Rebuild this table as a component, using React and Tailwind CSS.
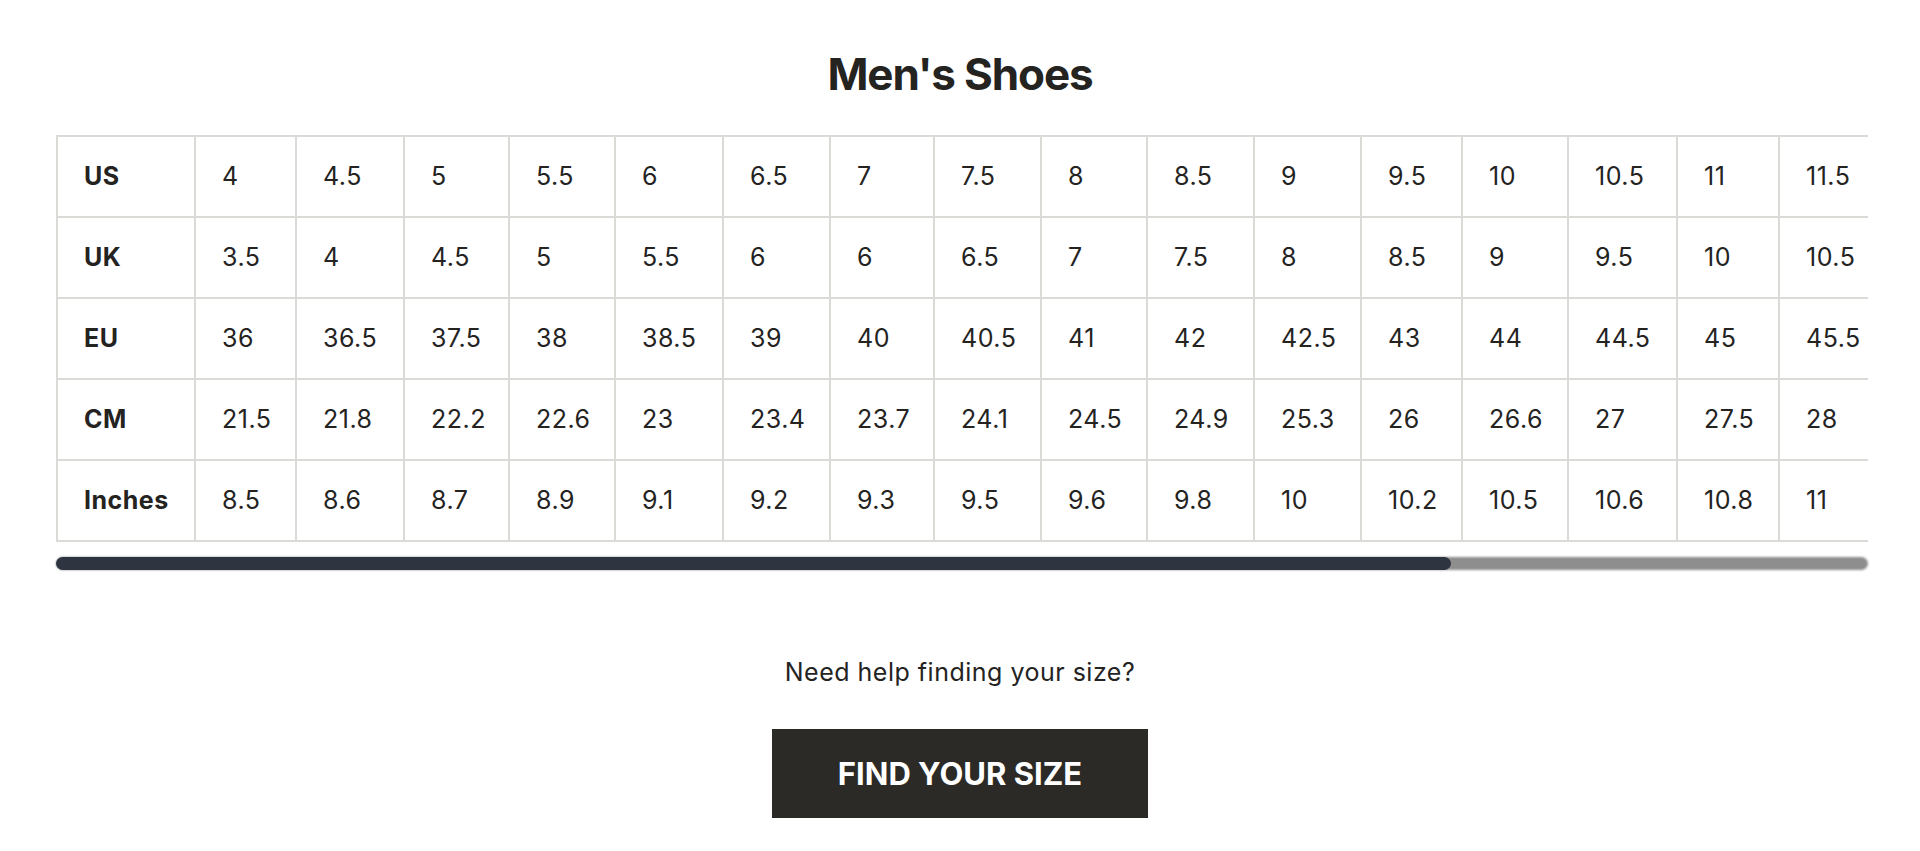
const font = { fontFamily: 'Inter, "Liberation Sans", sans-serif' };

const rows = [
  { label: 'US', values: ['4', '4.5', '5', '5.5', '6', '6.5', '7', '7.5', '8', '8.5', '9', '9.5', '10', '10.5', '11', '11.5', '12', '12.5', '13', '14', '15'] },
  { label: 'UK', values: ['3.5', '4', '4.5', '5', '5.5', '6', '6', '6.5', '7', '7.5', '8', '8.5', '9', '9.5', '10', '10.5', '11', '11.5', '12', '13', '14'] },
  { label: 'EU', values: ['36', '36.5', '37.5', '38', '38.5', '39', '40', '40.5', '41', '42', '42.5', '43', '44', '44.5', '45', '45.5', '46', '47', '47.5', '48.5', '49.5'] },
  { label: 'CM', values: ['21.5', '21.8', '22.2', '22.6', '23', '23.4', '23.7', '24.1', '24.5', '24.9', '25.3', '26', '26.6', '27', '27.5', '28', '28.5', '29', '29.5', '30', '31'] },
  { label: 'Inches', values: ['8.5', '8.6', '8.7', '8.9', '9.1', '9.2', '9.3', '9.5', '9.6', '9.8', '10', '10.2', '10.5', '10.6', '10.8', '11', '11.2', '11.4', '11.6', '12', '12.2'] },
];

// column widths taken from the chart, label column first
const colWidths = [
  'w-[138px]', 'w-[101px]', 'w-[108px]', 'w-[105px]', 'w-[106px]', 'w-[108px]', 'w-[107px]',
  'w-[104px]', 'w-[107px]', 'w-[106px]', 'w-[107px]', 'w-[107px]', 'w-[101px]', 'w-[106px]',
  'w-[109px]', 'w-[102px]', 'w-[105px]', 'w-[105px]', 'w-[106px]', 'w-[105px]', 'w-[105px]',
];

const cell = 'h-[81px] border-2 border-[#dcdad6] pl-[26px] pr-2 text-left align-middle text-[25px] leading-none tracking-[0.02em] whitespace-nowrap';

const App = () => {
  return (
    <div className="min-h-screen bg-white text-[#24231f]" style={font}>
      <h1 className="pt-[52px] text-center text-[44px] font-bold leading-none tracking-tight">
        Men's Shoes
      </h1>

      <div className="mt-[39px] pl-[56px] pr-[52px]">
        <div className="overflow-hidden">
          <table className="w-[2353px] table-fixed border-collapse">
            <colgroup>
              {colWidths.map((w, i) => (
                <col key={i} className={w} />
              ))}
            </colgroup>
            <tbody>
              {rows.map((row) => (
                <tr key={row.label}>
                  <th className={`${cell} font-bold`}>{row.label}</th>
                  {row.values.map((v, i) => (
                    <td key={i} className={`${cell} font-normal`}>
                      {v}
                    </td>
                  ))}
                </tr>
              ))}
            </tbody>
          </table>
        </div>

        {/* scroll indicator */}
        <div className="relative mt-[15px] h-[13px]">
          <div className="absolute inset-0 rounded-full bg-[#8e8e8e] blur-[1px]" />
          <div className="absolute inset-y-0 left-0 w-[1395px] rounded-full bg-[#2f3441]" />
        </div>
      </div>

      <div className="mt-[90px] flex flex-col items-center">
        <p className="text-[25px] leading-none tracking-[0.02em]">Need help finding your size?</p>
        <button className="mt-[44px] flex h-[89px] w-[376px] items-center justify-center bg-[#2b2a27] text-[31px] font-bold uppercase leading-none text-white">
          Find your size
        </button>
      </div>
    </div>
  );
};

export default App;
